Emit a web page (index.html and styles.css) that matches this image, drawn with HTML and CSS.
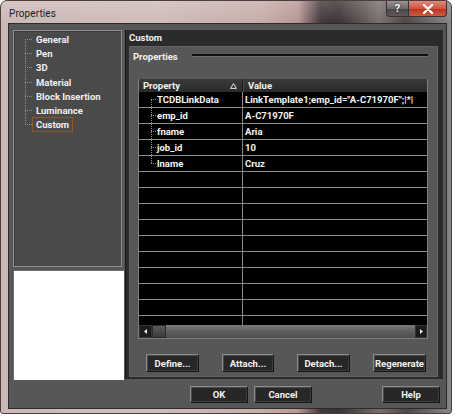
FILE: index.html
```html
<!DOCTYPE html>
<html>
<head>
<meta charset="utf-8">
<link rel="stylesheet" href="styles.css">
</head>
<body>
<div class="window">
  <div class="titlebar">
    <span class="title">Properties</span>
    <div class="caps">
      <div class="cap cap-help">?</div>
      <div class="cap cap-close">
        <svg width="12" height="10" viewBox="0 0 12 10"><path d="M2 1 L10 9 M10 1 L2 9" stroke="#fff" stroke-width="2.4" stroke-linecap="round"/></svg>
      </div>
    </div>
  </div>
  <div class="client">
    <div class="main">
      <div class="leftcol">
        <div class="tree">
          <div class="titem"><span class="twig first"></span><span class="tlabel">General</span></div>
          <div class="titem"><span class="twig"></span><span class="tlabel">Pen</span></div>
          <div class="titem"><span class="twig"></span><span class="tlabel">3D</span></div>
          <div class="titem"><span class="twig"></span><span class="tlabel">Material</span></div>
          <div class="titem"><span class="twig"></span><span class="tlabel">Block Insertion</span></div>
          <div class="titem"><span class="twig"></span><span class="tlabel">Luminance</span></div>
          <div class="titem"><span class="twig last"></span><span class="tlabel sel">Custom</span></div>
        </div>
        <div class="preview"></div>
      </div>
      <div class="rightcol">
        <div class="rhead">Custom</div>
        <div class="rpanel">
          <div class="group"><span class="glabel">Properties</span><div class="gline"></div></div>
          <div class="grid">
            <div class="ghead">
              <div class="gh gh1"><span>Property</span><svg class="sort" width="7" height="6" viewBox="0 0 7 6"><path d="M3.5 0.6 L6.4 5.4 L0.6 5.4 Z" fill="none" stroke="#e8e8e8" stroke-width="1"/></svg></div>
              <div class="gh gh2">Value</div>
            </div>
            <div class="gbody">
              <div class="row"><div class="c1"><span class="twig first"></span><span>TCDBLinkData</span></div><div class="c2">LinkTemplate1;emp_id="A-C71970F";|*|</div></div>
              <div class="row"><div class="c1"><span class="twig"></span><span>emp_id</span></div><div class="c2">A-C71970F</div></div>
              <div class="row"><div class="c1"><span class="twig"></span><span>fname</span></div><div class="c2">Aria</div></div>
              <div class="row"><div class="c1"><span class="twig"></span><span>job_id</span></div><div class="c2">10</div></div>
              <div class="row"><div class="c1"><span class="twig last"></span><span>lname</span></div><div class="c2">Cruz</div></div>
              <div class="row"><div class="c1"></div><div class="c2"></div></div>
              <div class="row"><div class="c1"></div><div class="c2"></div></div>
              <div class="row"><div class="c1"></div><div class="c2"></div></div>
              <div class="row"><div class="c1"></div><div class="c2"></div></div>
              <div class="row"><div class="c1"></div><div class="c2"></div></div>
              <div class="row"><div class="c1"></div><div class="c2"></div></div>
              <div class="row"><div class="c1"></div><div class="c2"></div></div>
              <div class="row"><div class="c1"></div><div class="c2"></div></div>
              <div class="row"><div class="c1"></div><div class="c2"></div></div>
              <div class="row"><div class="c1"></div><div class="c2"></div></div>
            </div>
            <div class="hscroll">
              <div class="sbtn"><svg width="3" height="5" viewBox="0 0 3 5"><path d="M3 0 L0 2.5 L3 5 Z" fill="#eee"/></svg></div>
              <div class="thumb"></div>
              <div class="track"></div>
              <div class="sbtn sbtn-r"><svg width="3" height="5" viewBox="0 0 3 5"><path d="M0 0 L3 2.5 L0 5 Z" fill="#eee"/></svg></div>
            </div>
          </div>
          <div class="btnrow">
            <div class="btn w53">Define...</div>
            <div class="btn w52">Attach...</div>
            <div class="btn w53">Detach...</div>
            <div class="btn w53">Regenerate</div>
          </div>
        </div>
      </div>
    </div>
    <div class="footer">
      <div class="btn fbtn">OK</div>
      <div class="btn fbtn">Cancel</div>
      <div class="btn fbtn help">Help</div>
    </div>
  </div>
</div>
</body>
</html>
```

FILE: styles.css
```css
* { box-sizing: border-box; }
body {
  margin: 0;
  background: #ffffff;
  font-family: Roboto, "Liberation Sans", sans-serif;
}
.window {
  width: 452px;
  height: 414px;
  border: 1px solid #4a3e3e;
  border-radius: 7px 7px 3px 3px;
  padding: 0 4px 4px 7px;
  display: flex;
  flex-direction: column;
  background:
    linear-gradient(to bottom, rgba(255,255,255,0.18), rgba(255,255,255,0) 22px),
    linear-gradient(to right, #cbb9b6 0%, #cdbcb9 35%, #c6aca8 58%, #b69894 66%, #43383a 71%, #3a3233 75%, #5b5352 80%, #7a6f6d 84%, #4e4646 90%, #8a8484 100%);
}
.titlebar {
  height: 22px;
  display: flex;
  align-items: flex-start;
  padding-left: 1px;
}
.title {
  font-size: 10px;
  color: #1c1c1c;
  margin-top: 7px;
  letter-spacing: 0.1px;
}
.caps {
  margin-left: auto;
  display: flex;
}
.cap {
  height: 16px;
  border: 1px solid #3a3030;
  border-top: none;
  display: flex;
  align-items: center;
  justify-content: center;
  color: #fff;
  font-weight: bold;
  font-size: 11px;
}
.cap-help {
  width: 22px;
  border-radius: 0 0 0 4px;
  background: linear-gradient(to bottom, #9a9494, #6e6868 50%, #4c4646 51%, #5e5858);
  border-right: none;
  text-shadow: 0 0 2px #000;
}
.cap-close {
  width: 39px;
  border-radius: 0 0 4px 0;
  background: linear-gradient(to bottom, #e38a7a, #d0533f 50%, #b8321f 51%, #cf5a3c);
}
.client {
  flex: 1;
  border: 1px solid #2c2c2c;
  background: #575757;
  padding: 6px 3px 0 4px;
  display: flex;
  flex-direction: column;
}
.main {
  height: 350px;
  display: flex;
}
.leftcol {
  width: 111px;
  display: flex;
  flex-direction: column;
}
.tree {
  width: 109px;
  height: 237px;
  background: #4a4a4a;
  border: 1px solid #8e8e8e;
  box-shadow: inset 1px 1px 0 #3c3c3c;
  padding: 1px 0 0 11px;
}
.titem {
  height: 14.3px;
  display: flex;
  align-items: center;
}
.twig {
  width: 7px;
  height: 100%;
  flex: none;
  background:
    repeating-linear-gradient(to right, #8c8c8c 0 1px, transparent 1px 2px) no-repeat 0 50% / 100% 1px,
    repeating-linear-gradient(to bottom, #8c8c8c 0 1px, transparent 1px 2px) no-repeat 0 0 / 1px 100%;
}
.twig.first {
  background:
    repeating-linear-gradient(to right, #8c8c8c 0 1px, transparent 1px 2px) no-repeat 0 50% / 100% 1px,
    repeating-linear-gradient(to bottom, #8c8c8c 0 1px, transparent 1px 2px) no-repeat 0 100% / 1px 50%;
}
.twig.last {
  background:
    repeating-linear-gradient(to right, #8c8c8c 0 1px, transparent 1px 2px) no-repeat 0 50% / 100% 1px,
    repeating-linear-gradient(to bottom, #8c8c8c 0 1px, transparent 1px 2px) no-repeat 0 0 / 1px 50%;
}
.tlabel {
  font-size: 9.5px;
  font-weight: bold;
  color: #f0f0f0;
  padding: 1px 3px;
  border: 1px solid transparent;
  line-height: 11px;
  white-space: nowrap;
}
.tlabel.sel {
  border-color: #8a5a2c;
}
.preview {
  margin-top: 3px;
  height: 110px;
  background: #ffffff;
  border-top: 1px solid #6c6c6c;
  border-left: 1px solid #6c6c6c;
}
.rightcol {
  margin-left: 1px;
  width: 318px;
  height: 349px;
  background: #2b2b2b;
  border-left: 1px solid #1a1a1a;
  padding: 0 5px 2px 3px;
  display: flex;
  flex-direction: column;
}
.rhead {
  height: 16px;
  font-size: 9.5px;
  font-weight: bold;
  color: #f2f2f2;
  padding-left: 0;
  line-height: 15px;
}
.rpanel {
  flex: 1;
  background: #575757;
  border: 1px solid #636363;
  display: flex;
  flex-direction: column;
}
.group {
  margin-top: 4px;
  height: 12px;
  display: flex;
  align-items: center;
  padding-left: 3px;
}
.glabel {
  font-size: 9.5px;
  font-weight: bold;
  color: #f0f0f0;
  line-height: 12px;
}
.gline {
  flex: 1;
  margin: -3px 9px 0 14px;
  height: 3px;
  background: #111111;
  border-bottom: 1px solid #6e6e6e;
}
.grid {
  margin: 16px 9px 0 8px;
  border: 1px solid #7e7e7e;
  border-top: none;
  display: flex;
  flex-direction: column;
}
.ghead {
  height: 13px;
  background: linear-gradient(to bottom, #3a3a3a, #2a2a2a);
  display: grid;
  grid-template-columns: 104px 1fr;
}
.gh {
  font-size: 9.5px;
  font-weight: bold;
  color: #f0f0f0;
  line-height: 13px;
}
.gh1 {
  padding: 0 5px 0 4px;
  display: flex;
  justify-content: space-between;
  align-items: center;
  border-right: 1px solid #1a1a1a;
}
.gh2 {
  padding-left: 4px;
  border-left: 1px solid #4a4a4a;
}
.gbody {
  height: 233px;
  overflow: hidden;
  background: #000000;
}
.row {
  height: 16px;
  border-bottom: 1px solid #8a8a8a;
  display: grid;
  grid-template-columns: 104px 1fr;
  font-size: 9.5px;
  font-weight: bold;
  color: #f4f4f4;
}
.c1 {
  border-right: 1px solid #8a8a8a;
  padding-left: 12px;
  display: flex;
  align-items: center;
  white-space: nowrap;
}
.c1 .twig { width: 6px; }
.c2 {
  padding-left: 2px;
  display: flex;
  align-items: center;
  white-space: nowrap;
  overflow: hidden;
}
.hscroll {
  height: 13px;
  display: flex;
  background: #000;
}
.sbtn {
  width: 13px;
  background: #1c1c1c;
  border: 1px solid #333;
  display: flex;
  align-items: center;
  justify-content: center;
}
.sbtn-r { width: 12px; }
.thumb {
  width: 14px;
  background: linear-gradient(to bottom, #5a5a5a, #3c3c3c);
  border: 1px solid #2a2a2a;
}
.track {
  flex: 1;
  background: linear-gradient(to bottom, #7a7a7a, #5e5e5e 50%, #4e4e4e);
}
.btnrow {
  margin-top: 15px;
  padding: 0 11px 0 16px;
  display: flex;
  justify-content: space-between;
}
.btn {
  height: 18px;
  background: #272727;
  border: 1px solid;
  border-color: #8a8a8a #161616 #161616 #8a8a8a;
  box-shadow: inset -1px -1px 0 #3c3c3c, inset 1px 1px 0 #4a4a4a;
  font-size: 9.5px;
  font-weight: bold;
  color: #f2f2f2;
  display: flex;
  align-items: center;
  justify-content: center;
  white-space: nowrap;
}
.w53 { width: 53px; }
.w52 { width: 52px; }
.footer {
  margin-top: 6px;
  display: flex;
  justify-content: flex-end;
  gap: 6px;
  padding-right: 3px;
}
.fbtn {
  width: 58px;
  height: 17px;
}
.fbtn.help {
  margin-left: 64px;
}
```
